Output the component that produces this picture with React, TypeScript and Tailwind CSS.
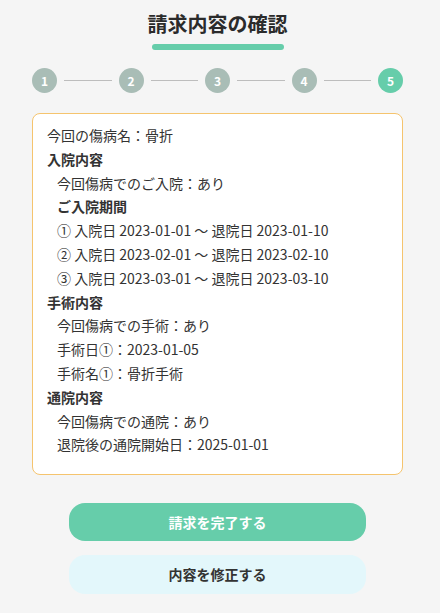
import React from "react";

const steps = [1, 2, 3, 4, 5];
const current = 5;

type Row = { text: string; kind: "head" | "item" | "top" };

const rows: Row[] = [
  { text: "今回の傷病名：骨折", kind: "top" },
  { text: "入院内容", kind: "head" },
  { text: "今回傷病でのご入院：あり", kind: "item" },
  { text: "ご入院期間", kind: "item" },
  { text: "① 入院日 2023-01-01 ～ 退院日 2023-01-10", kind: "item" },
  { text: "② 入院日 2023-02-01 ～ 退院日 2023-02-10", kind: "item" },
  { text: "③ 入院日 2023-03-01 ～ 退院日 2023-03-10", kind: "item" },
  { text: "手術内容", kind: "head" },
  { text: "今回傷病での手術：あり", kind: "item" },
  { text: "手術日①：2023-01-05", kind: "item" },
  { text: "手術名①：骨折手術", kind: "item" },
  { text: "通院内容", kind: "head" },
  { text: "今回傷病での通院：あり", kind: "item" },
  { text: "退院後の通院開始日：2025-01-01", kind: "item" },
];

export default function App() {
  return (
    <div
      className="min-h-[613px] bg-[#f5f5f5] text-[#333] pl-[32px] pr-[37px] pt-[9px] pb-[20px]"
      style={{ fontFamily: '"Noto Sans CJK JP", "Noto Sans", sans-serif' }}
    >
      {/* タイトル */}
      <div className="flex flex-col items-center">
        <h1 className="text-[20px] leading-[30px] font-bold text-[#2b2b2b]">
          請求内容の確認
        </h1>
        <div className="mt-[5px] h-[6px] w-[132px] rounded-full bg-[#66cdaa]" />
      </div>

      {/* ステップ */}
      <div className="mt-[18px] flex items-center">
        {steps.map((s, i) => (
          <React.Fragment key={s}>
            <div
              className={
                s === current
                  ? "flex h-[25px] w-[25px] shrink-0 items-center justify-center rounded-full bg-[#66cdaa] text-[12px] font-bold text-white"
                  : "flex h-[25px] w-[25px] shrink-0 items-center justify-center rounded-full bg-[#a9bdb6] text-[12px] font-bold text-white"
              }
            >
              {s}
            </div>
            {i < steps.length - 1 && (
              <div className="mx-[7px] h-px flex-1 bg-[#bdbdbd]" />
            )}
          </React.Fragment>
        ))}
      </div>

      {/* 内容 */}
      <div className="mt-[20px] rounded-[8px] border-[1.5px] border-[#f5c46e] bg-white px-[14px] pt-[10px] pb-[17px] text-[14px] leading-[1.7]">
        {rows.map((r, i) => (
          <div
            key={i}
            className={
              r.kind === "head"
                ? "font-bold"
                : r.kind === "item"
                ? "pl-[10px]" + (r.text === "ご入院期間" ? " font-bold" : "")
                : ""
            }
          >
            {r.text}
          </div>
        ))}
      </div>

      {/* ボタン */}
      <div className="mt-[28px] flex flex-col items-center gap-[14px]">
        <button className="h-[38px] w-[297px] rounded-[16px] bg-[#66cdaa] text-[14px] font-bold text-white">
          請求を完了する
        </button>
        <button className="h-[39px] w-[297px] rounded-[16px] bg-[#e3f7fb] text-[14px] font-bold text-[#333]">
          内容を修正する
        </button>
      </div>
    </div>
  );
}
